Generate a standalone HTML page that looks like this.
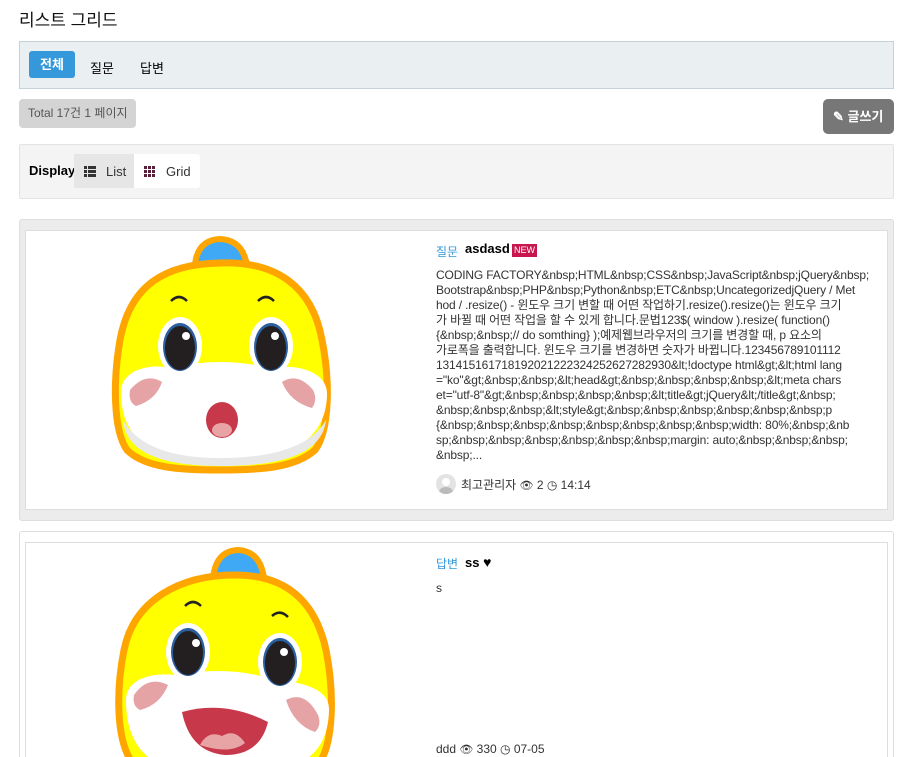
<!DOCTYPE html>
<html><head><meta charset="utf-8"><style>
*{box-sizing:border-box;margin:0;padding:0}
html,body{width:906px;height:757px;overflow:hidden}
body{background:#fff;font-family:"Liberation Sans","Noto Sans CJK KR",sans-serif;color:#000;position:relative}
.a{position:absolute}
.t{font-size:12px;line-height:15px;color:#333;white-space:nowrap;letter-spacing:-0.15px}
</style></head><body>
<div class="a" style="left:19px;top:6px;font-size:17px;color:#111">리스트 그리드</div>

<div class="a" style="left:19px;top:41px;width:875px;height:48px;background:#eaeff2;border:1px solid #c5d3d8"></div>
<div class="a" style="left:29px;top:51px;width:46px;height:27px;background:#3498db;border-radius:3px;color:#fff;font-size:13px;font-weight:bold;text-align:center;line-height:27px">전체</div>
<div class="a" style="left:90px;top:58px;font-size:13px">질문</div>
<div class="a" style="left:140px;top:58px;font-size:13px">답변</div>

<div class="a" style="left:19px;top:99px;width:117px;height:29px;background:#d4d4d4;border-radius:4px;font-size:12px;color:#555;line-height:29px;padding-left:9px">Total 17건 1 페이지</div>
<div class="a" style="left:823px;top:99px;width:71px;height:35px;background:#777;border-radius:5px;color:#fff;font-size:13px;font-weight:bold;line-height:35px;padding-left:10px">✎ 글쓰기</div>

<div class="a" style="left:19px;top:144px;width:875px;height:55px;background:#f4f4f4;border:1px solid #e3e3e3;border-radius:2px"></div>
<div class="a" style="left:29px;top:163px;font-size:13px;font-weight:bold">Display</div>
<div class="a" style="left:74px;top:154px;width:60px;height:34px;background:#e6e6e6"></div>
<div class="a" style="left:134px;top:154px;width:66px;height:34px;background:#fff;border-radius:0 3px 3px 0"></div>
<svg class="a" style="left:84px;top:166px" width="12" height="11"><g fill="#333"><rect x="0" y="0" width="3" height="3"/><rect x="4" y="0" width="8" height="3"/><rect x="0" y="4" width="3" height="3"/><rect x="4" y="4" width="8" height="3"/><rect x="0" y="8" width="3" height="3"/><rect x="4" y="8" width="8" height="3"/></g></svg>
<div class="a" style="left:106px;top:164px;font-size:13px;color:#333">List</div>
<svg class="a" style="left:144px;top:166px" width="11" height="11"><g fill="#5a1f3a"><rect x="0" y="0" width="3" height="3"/><rect x="4" y="0" width="3" height="3"/><rect x="8" y="0" width="3" height="3"/><rect x="0" y="4" width="3" height="3"/><rect x="4" y="4" width="3" height="3"/><rect x="8" y="4" width="3" height="3"/><rect x="0" y="8" width="3" height="3"/><rect x="4" y="8" width="3" height="3"/><rect x="8" y="8" width="3" height="3"/></g></svg>
<div class="a" style="left:166px;top:164px;font-size:13px;color:#333">Grid</div>

<!-- card 1 -->
<div class="a" style="left:19px;top:219px;width:875px;height:302px;background:#ececec;border:1px solid #ddd;border-radius:3px"></div>
<div class="a" style="left:25px;top:230px;width:863px;height:280px;background:#fff;border:1px solid #ddd"></div>
<svg class="a" style="left:100px;top:230px" width="240" height="250" viewBox="0 0 240 250">
<path d="M95 34 Q98 10 120 9 Q143 10 147 36 Z" fill="#3fa9f5" stroke="#ffa500" stroke-width="6"/>
<path d="M120 33 C175 31 212 55 222 110 C230 150 230 200 215 220 C195 238 160 240 120 240 C80 240 45 238 27 220 C13 200 13 150 20 110 C30 55 65 34 120 33 Z" fill="#ffff00" stroke="#ffa500" stroke-width="7"/>
<path d="M21 162 C21 140 50 133 70 138 Q120 126 170 138 C200 133 228 143 227 165 C226 215 180 232 120 232 C60 232 21 215 21 162 Z" fill="#fff"/>
<path d="M23 190 C40 220 80 228 120 228 C170 228 210 218 226 190 C222 225 180 236 120 236 C60 236 26 222 23 190 Z" fill="#e8e8e8"/>
<ellipse cx="80" cy="116" rx="22" ry="29" fill="#fff"/><ellipse cx="80" cy="117" rx="17" ry="24" fill="#2a5fa0"/><ellipse cx="80" cy="118" rx="15" ry="22" fill="#231f20"/><circle cx="86" cy="106" r="4" fill="#fff"/>
<ellipse cx="171" cy="116" rx="22" ry="29" fill="#fff"/><ellipse cx="171" cy="117" rx="17" ry="24" fill="#2a5fa0"/><ellipse cx="171" cy="118" rx="15" ry="22" fill="#231f20"/><circle cx="175" cy="106" r="4" fill="#fff"/>
<path d="M71 71 Q79 63 87 71" fill="none" stroke="#222" stroke-width="2.5"/>
<path d="M158 71 Q166 63 174 71" fill="none" stroke="#222" stroke-width="2.5"/>
<path d="M30 160 Q45 142 62 152 Q56 170 36 176 Q28 172 30 160 Z" fill="#e5a3a5"/>
<path d="M213 160 Q198 142 182 152 Q190 172 212 178 Q218 170 213 160 Z" fill="#e5a3a5"/>
<ellipse cx="122" cy="190" rx="16" ry="18" fill="#c6384a"/><ellipse cx="122" cy="200" rx="10" ry="7" fill="#e8a3a5"/>
</svg>
<div class="a" style="left:436px;top:243px;font-size:12px;color:#3498db">질문</div>
<div class="a" style="left:465px;top:241px;font-size:13px;font-weight:bold">asdasd</div>
<div class="a" style="left:512px;top:244px;width:25px;height:13px;background:#c8174f;color:#fff;font-size:9px;line-height:13px;text-align:center">NEW</div>
<div class="a t" style="left:436px;top:268px">CODING FACTORY&amp;nbsp;HTML&amp;nbsp;CSS&amp;nbsp;JavaScript&amp;nbsp;jQuery&amp;nbsp;<br>Bootstrap&amp;nbsp;PHP&amp;nbsp;Python&amp;nbsp;ETC&amp;nbsp;UncategorizedjQuery / Met<br>hod / .resize() - 윈도우 크기 변할 때 어떤 작업하기.resize().resize()는 윈도우 크기<br>가 바뀔 때 어떤 작업을 할 수 있게 합니다.문법123$( window ).resize( function()<br>{&amp;nbsp;&amp;nbsp;// do somthing} );예제웹브라우저의 크기를 변경할 때, p 요소의<br>가로폭을 출력합니다. 윈도우 크기를 변경하면 숫자가 바뀝니다.123456789101112<br>131415161718192021222324252627282930&amp;lt;!doctype html&amp;gt;&amp;lt;html lang<br>="ko"&amp;gt;&amp;nbsp;&amp;nbsp;&amp;lt;head&amp;gt;&amp;nbsp;&amp;nbsp;&amp;nbsp;&amp;nbsp;&amp;lt;meta chars<br>et="utf-8"&amp;gt;&amp;nbsp;&amp;nbsp;&amp;nbsp;&amp;nbsp;&amp;lt;title&amp;gt;jQuery&amp;lt;/title&amp;gt;&amp;nbsp;<br>&amp;nbsp;&amp;nbsp;&amp;nbsp;&amp;lt;style&amp;gt;&amp;nbsp;&amp;nbsp;&amp;nbsp;&amp;nbsp;&amp;nbsp;&amp;nbsp;p<br>{&amp;nbsp;&amp;nbsp;&amp;nbsp;&amp;nbsp;&amp;nbsp;&amp;nbsp;&amp;nbsp;&amp;nbsp;width: 80%;&amp;nbsp;&amp;nb<br>sp;&amp;nbsp;&amp;nbsp;&amp;nbsp;&amp;nbsp;&amp;nbsp;&amp;nbsp;margin: auto;&amp;nbsp;&amp;nbsp;&amp;nbsp;<br>&amp;nbsp;...</div>
<div class="a" style="left:436px;top:474px;width:20px;height:20px;border-radius:50%;background:#e3e3e3;overflow:hidden"><div style="position:absolute;left:6px;top:4px;width:8px;height:8px;border-radius:50%;background:#fff"></div><div style="position:absolute;left:3px;top:13px;width:14px;height:10px;border-radius:50%;background:#bbb"></div></div>
<div class="a" style="left:461px;top:476px;font-size:12px;color:#333">최고관리자 <span style="font-size:11px">👁</span> 2 ◷ 14:14</div>

<!-- card 2 -->
<div class="a" style="left:19px;top:531px;width:875px;height:240px;background:#fff;border:1px solid #ddd;border-radius:3px"></div>
<div class="a" style="left:25px;top:542px;width:863px;height:240px;background:#fff;border:1px solid #ddd"></div>
<svg class="a" style="left:100px;top:540px" width="240" height="217" viewBox="0 0 240 217">
<path d="M113 38 Q116 11 138 10 Q160 11 164 38 Z" fill="#3fa9f5" stroke="#ffa500" stroke-width="6"/>
<path d="M135 35 C185 35 215 60 226 110 C234 150 234 200 220 222 C200 240 165 242 125 242 C85 242 50 240 32 222 C16 200 16 150 24 110 C34 60 80 35 135 35 Z" fill="#ffff00" stroke="#ffa500" stroke-width="7"/>
<path d="M26 160 C26 140 50 132 75 135 Q130 125 175 140 C205 142 230 150 229 170 C228 225 185 236 125 236 C65 236 26 220 26 160 Z" fill="#fff"/>
<ellipse cx="88" cy="112" rx="22" ry="29" fill="#fff"/><ellipse cx="88" cy="112" rx="17" ry="24" fill="#2a5fa0"/><ellipse cx="88" cy="113" rx="15" ry="22" fill="#231f20"/><circle cx="96" cy="103" r="4" fill="#fff"/>
<ellipse cx="180" cy="122" rx="22" ry="29" fill="#fff"/><ellipse cx="180" cy="122" rx="17" ry="24" fill="#2a5fa0"/><ellipse cx="180" cy="123" rx="15" ry="22" fill="#231f20"/><circle cx="184" cy="112" r="4" fill="#fff"/>
<path d="M85 66 Q93 58 101 66" fill="none" stroke="#222" stroke-width="2.5"/>
<path d="M172 76 Q180 69 188 77" fill="none" stroke="#222" stroke-width="2.5"/>
<path d="M34 155 Q48 135 68 145 Q60 165 40 170 Q32 166 34 155 Z" fill="#e5a3a5"/>
<path d="M218 175 Q205 150 186 160 Q194 185 215 192 Q222 185 218 175 Z" fill="#e5a3a5"/>
<path d="M82 172 Q125 160 168 182 Q160 215 125 215 Q90 212 82 172 Z" fill="#c6384a"/>
<path d="M100 205 Q108 190 122 196 Q135 188 145 203 Q130 215 100 205 Z" fill="#e8a3a5"/>
</svg>
<div class="a" style="left:436px;top:555px;font-size:12px;color:#3498db">답변</div>
<div class="a" style="left:465px;top:554px;font-size:13px;font-weight:bold">ss <span style="font-size:14px">♥</span></div>
<div class="a t" style="left:436px;top:581px">s</div>
<div class="a" style="left:436px;top:742px;font-size:12px;color:#333">ddd <span style="font-size:11px">👁</span> 330 ◷ 07-05</div>
</body></html>
